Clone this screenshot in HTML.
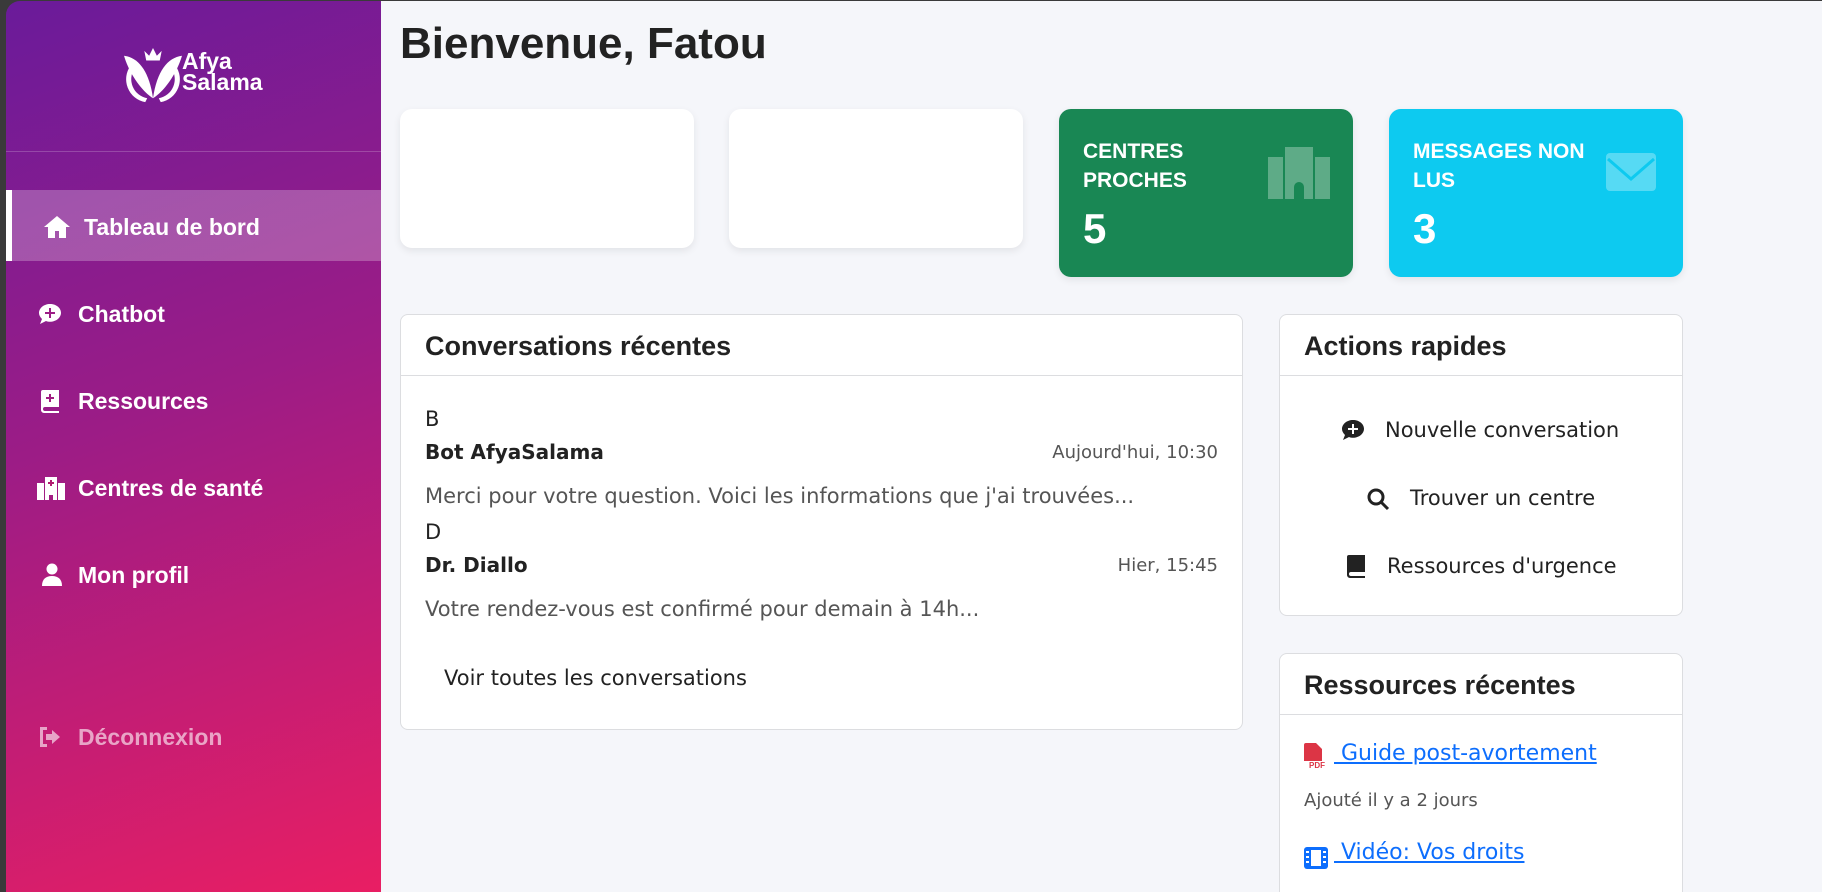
<!DOCTYPE html>
<html style="overflow:hidden"><head><meta charset="utf-8"><style>
*{box-sizing:border-box;margin:0;padding:0}
body{width:1822px;height:892px;overflow:hidden;background:#3a3a3a;font-family:"Liberation Sans",sans-serif;position:relative}
.side{position:absolute;left:6px;top:1px;width:375px;height:891px;border-top-left-radius:14px;background:linear-gradient(160deg,#6a1b9a 0%,#9c1c86 45%,#e91e63 100%);color:#fff;overflow:hidden}
.main{position:absolute;left:381px;top:1px;right:0;bottom:0;background:#f5f6fa;overflow:hidden}
.abs{position:absolute}
.nav{position:absolute;left:0;width:375px;height:40px;display:flex;align-items:center;font-size:23px;font-weight:bold;color:#fff}
.nav svg{position:absolute;left:32px}
.nav span{position:absolute;left:72px}
.card{position:absolute;background:#fff;border:1px solid #dcdde0;border-radius:8px;overflow:hidden}
.ch{height:61px;border-bottom:1px solid #dcdde0;padding-left:24px;font-size:27px;font-weight:bold;color:#222;line-height:62px}
.stat{position:absolute;border-radius:12px;color:#fff;box-shadow:0 3px 8px rgba(0,0,0,.08)}
.t{position:absolute;font-family:"DejaVu Sans",sans-serif;font-size:21px;color:#222;white-space:nowrap}
</style></head><body>
<div class="side">
 <svg class="abs" style="left:118px;top:45px" width="58" height="60" viewBox="0 0 60 62" fill="#fff">
  <path d="M30 2l4 8 5-5-2 10h-14l-2-10 5 5z"/>
  <path d="M0 10c15 2 26 16 30 44-11-7-24-24-30-44z"/>
  <path d="M60 10c-15 2-26 16-30 44 11-7 24-24 30-44z"/>
  <path d="M7 20a24 24 0 0 0 15 38l2-4a20 20 0 0 1-13-31z"/>
  <path d="M53 20a24 24 0 0 1-15 38l-2-4a20 20 0 0 0 13-31z"/>
 </svg>
 <div class="abs" style="left:176px;top:50px;font-size:23px;font-weight:bold;line-height:21px">Afya<br>Salama</div>
 <div class="abs" style="left:0;top:150px;width:375px;height:1px;background:rgba(255,255,255,.2)"></div>
 <div class="abs" style="left:0;top:189px;width:375px;height:71px;background:rgba(255,255,255,.25);border-left:6px solid #fff"></div>
 <div class="nav" style="top:206px"><svg style="left:37px" width="28" height="24" viewBox="0 0 28 24" fill="#fff"><path d="M14 1L1 12h4v11h7v-7h4v7h7V12h4z"/></svg><span style="left:78px">Tableau de bord</span></div>
 <div class="nav" style="top:293px"><svg width="24" height="22" viewBox="0 0 24 22" fill="#fff"><path d="M12 1C6 1 1 5 1 10c0 2 1 4 3 6l-2 5 6-3c1 .5 3 .8 4 .8 6 0 11-4 11-9S18 1 12 1z"/><path d="M11 5h2v4h4v2h-4v4h-2v-4H7V9h4z" fill="#9c1c86"/></svg><span>Chatbot</span></div>
 <div class="nav" style="top:380px"><svg style="left:34px" width="20" height="24" viewBox="0 0 20 24" fill="#fff"><path d="M3 1h16v17H5a2 2 0 0 0 0 4h14v2H4a3 3 0 0 1-3-3V3a2 2 0 0 1 2-2z"/><path d="M9 5h2v3h3v2h-3v3H9v-3H6V8h3z" fill="#a01c80"/></svg><span>Ressources</span></div>
 <div class="nav" style="top:467px"><svg style="left:30px" width="30" height="24" viewBox="0 0 30 24" fill="#fff"><path d="M9 1h12v23h-4v-5h-4v5H9z M1 7h7v17H1z M22 7h7v17h-7z"/><path d="M14 4h2v2h2v2h-2v2h-2V8h-2V6h2z" fill="#b01c70"/></svg><span>Centres de santé</span></div>
 <div class="nav" style="top:554px"><svg style="left:36px" width="20" height="24" viewBox="0 0 20 24" fill="#fff"><circle cx="10" cy="6" r="5.5"/><path d="M0 23c0-7 4-10 10-10s10 3 10 10z"/></svg><span>Mon profil</span></div>
 <div class="nav" style="top:716px;color:rgba(255,255,255,.6)"><svg width="24" height="22" viewBox="0 0 24 22" fill="rgba(255,255,255,.6)"><path d="M2 1h7v3H5v14h4v3H2z M14 4l8 7-8 7v-4H8V8h6z"/></svg><span>Déconnexion</span></div>
</div>
<div class="main">
 <div class="abs" style="left:19px;top:18px;font-size:44px;font-weight:bold;color:#222">Bienvenue, Fatou</div>
 <div class="stat" style="left:19px;top:108px;width:294px;height:139px;background:#fff"></div>
 <div class="stat" style="left:348px;top:108px;width:294px;height:139px;background:#fff"></div>
 <div class="stat" style="left:678px;top:108px;width:294px;height:168px;background:#198754">
  <div class="abs" style="left:24px;top:28px;font-size:21px;font-weight:bold;line-height:29px">CENTRES<br>PROCHES</div>
  <div class="abs" style="left:24px;top:96px;font-size:42px;font-weight:bold">5</div>
  <svg class="abs" style="left:209px;top:38px" width="62" height="52" viewBox="0 0 62 52" fill="rgba(255,255,255,.3)"><path d="M17 0h28v52h-9V40a5 5 0 0 0-10 0v12h-9z M0 10h15v42H0z M47 10h15v42H47z"/></svg>
 </div>
 <div class="stat" style="left:1008px;top:108px;width:294px;height:168px;background:#0dcaf0">
  <div class="abs" style="left:24px;top:28px;font-size:21px;font-weight:bold;line-height:29px">MESSAGES NON<br>LUS</div>
  <div class="abs" style="left:24px;top:96px;font-size:42px;font-weight:bold">3</div>
  <svg class="abs" style="left:217px;top:44px" width="50" height="38" viewBox="0 0 50 38"><rect width="50" height="38" rx="4" fill="rgba(255,255,255,.3)"/><path d="M2 6l23 20 23-20" stroke="#0dcaf0" stroke-width="3" fill="none"/></svg>
 </div>
 <div class="card" style="left:19px;top:313px;width:843px;height:416px">
  <div class="ch">Conversations récentes</div>
  <div class="t" style="left:24px;top:92px">B</div>
  <div class="t" style="left:24px;top:125px;font-weight:bold;font-size:20px">Bot AfyaSalama</div>
  <div class="t" style="right:24px;top:127px;font-size:18px;color:#555">Aujourd'hui, 10:30</div>
  <div class="t" style="left:24px;top:169px;color:#555">Merci pour votre question. Voici les informations que j'ai trouvées...</div>
  <div class="t" style="left:24px;top:205px">D</div>
  <div class="t" style="left:24px;top:238px;font-weight:bold;font-size:20px">Dr. Diallo</div>
  <div class="t" style="right:24px;top:240px;font-size:18px;color:#555">Hier, 15:45</div>
  <div class="t" style="left:24px;top:282px;color:#555">Votre rendez-vous est confirmé pour demain à 14h...</div>
  <div class="t" style="left:43px;top:351px">Voir toutes les conversations</div>
 </div>
 <div class="card" style="left:898px;top:313px;width:404px;height:302px">
  <div class="ch">Actions rapides</div>
  <svg class="abs" style="left:61px;top:104px" width="24" height="22" viewBox="0 0 24 22" fill="#222"><path d="M12 1C6 1 1 5 1 10c0 2 1 4 3 6l-2 5 6-3c1 .5 3 .8 4 .8 6 0 11-4 11-9S18 1 12 1z"/><path d="M11 5h2v4h4v2h-4v4h-2v-4H7V9h4z" fill="#fff"/></svg>
  <div class="t" style="left:105px;top:103px">Nouvelle conversation</div>
  <svg class="abs" style="left:86px;top:172px" width="24" height="24" viewBox="0 0 24 24" fill="none" stroke="#222" stroke-width="3"><circle cx="10" cy="10" r="7"/><path d="M15 15l7 7"/></svg>
  <div class="t" style="left:130px;top:171px">Trouver un centre</div>
  <svg class="abs" style="left:66px;top:239px" width="20" height="24" viewBox="0 0 20 24" fill="#222"><path d="M3 1h16v17H5a2 2 0 0 0 0 4h14v2H4a3 3 0 0 1-3-3V3a2 2 0 0 1 2-2z"/></svg>
  <div class="t" style="left:107px;top:239px">Ressources d'urgence</div>
 </div>
 <div class="card" style="left:898px;top:652px;width:404px;height:260px">
  <div class="ch">Ressources récentes</div>
  <svg class="abs" style="left:24px;top:89px" width="24" height="26" viewBox="0 0 24 26"><path d="M0 2a2 2 0 0 1 2-2h10l6 6v12H0z" fill="#dc3545"/><text x="5" y="25" font-size="8" font-weight="bold" fill="#dc3545" font-family="Liberation Sans">PDF</text></svg>
  <div class="t" style="left:54px;top:87px;color:#0d6efd;text-decoration:underline;font-size:22px">&nbsp;Guide post-avortement</div>
  <div class="t" style="left:24px;top:136px;color:#555;font-size:18px">Ajouté il y a 2 jours</div>
  <svg class="abs" style="left:24px;top:193px" width="24" height="22" viewBox="0 0 24 22"><rect width="24" height="22" rx="3" fill="#0d6efd"/><rect x="7" y="3" width="10" height="16" fill="#fff"/><path d="M2 5h3M2 10h3M2 15h3M19 5h3M19 10h3M19 15h3" stroke="#fff" stroke-width="2"/></svg>
  <div class="t" style="left:54px;top:186px;color:#0d6efd;text-decoration:underline;font-size:22px">&nbsp;Vidéo: Vos droits</div>
 </div>
</div>
</body></html>
